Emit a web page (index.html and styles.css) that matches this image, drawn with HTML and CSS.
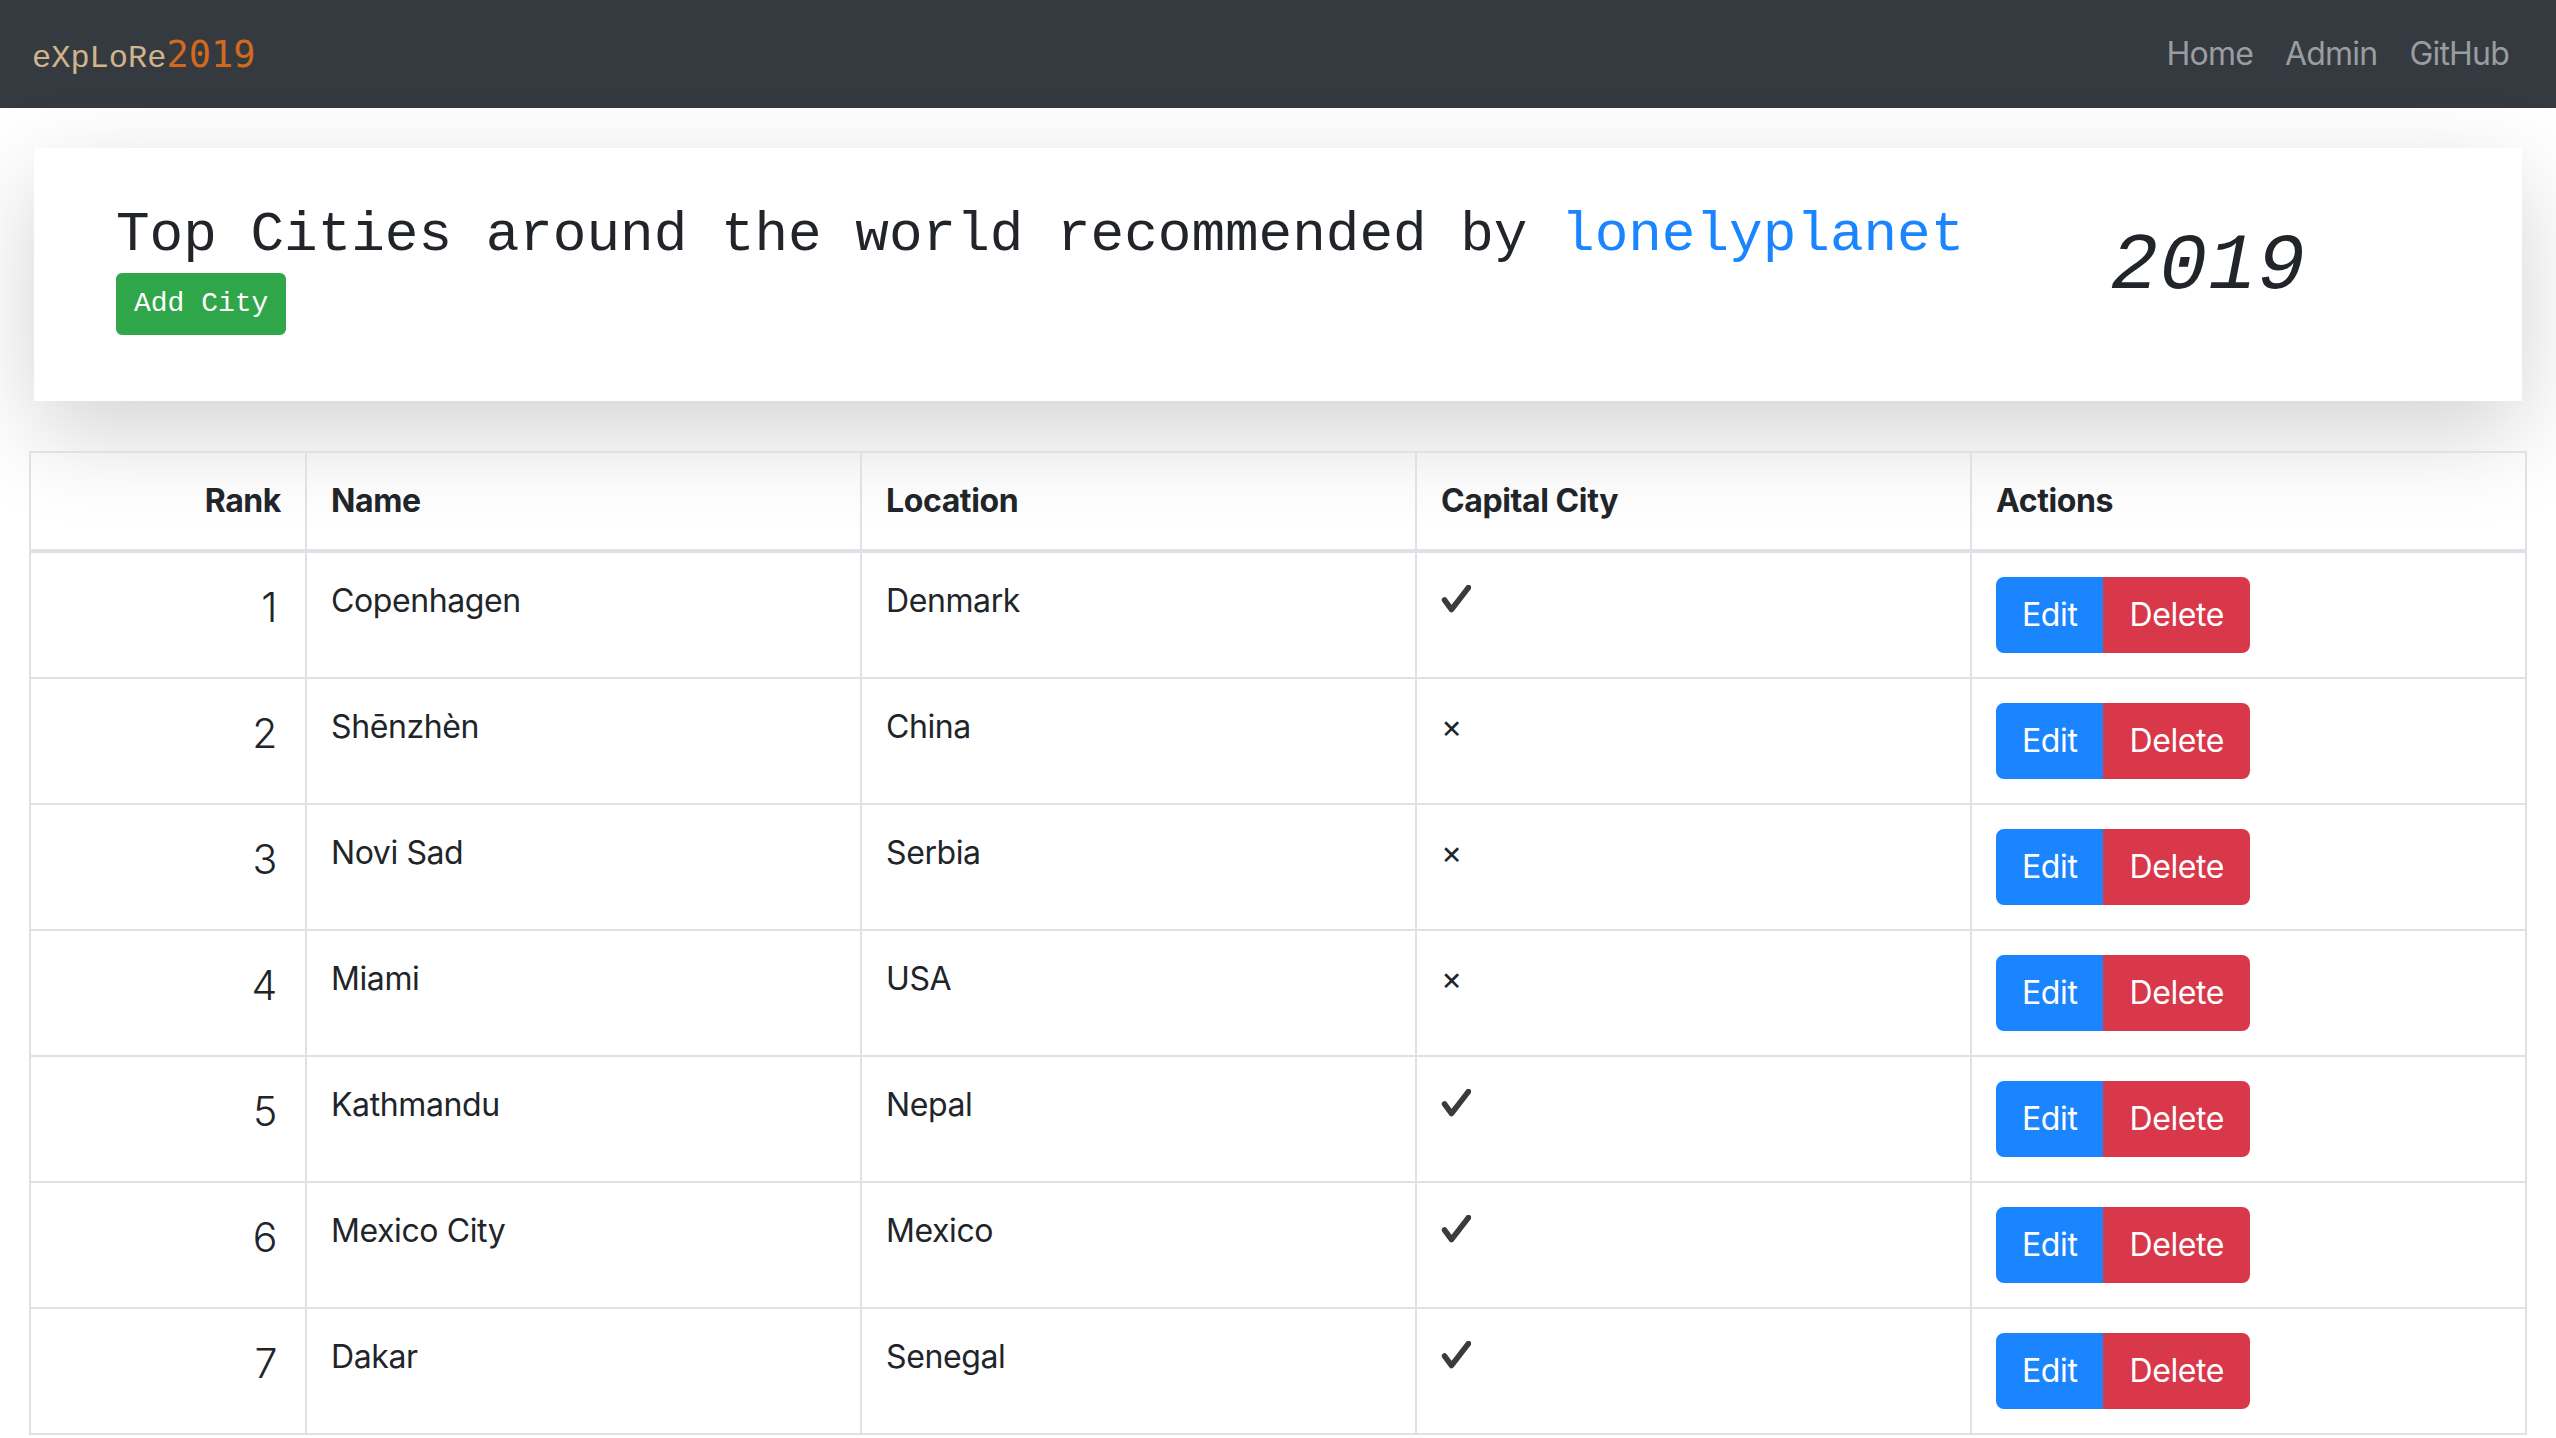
FILE: index.html
```html
<!DOCTYPE html>
<html lang="en">
<head>
<meta charset="utf-8">
<title>eXpLoRe2019</title>
<link rel="stylesheet" href="styles.css">
</head>
<body>
<nav class="navbar">
  <a class="brand" href="#">eXpLoRe<span class="brand-year">2019</span></a>
  <div class="nav-links">
    <a class="nav-link" href="#">Home</a>
    <a class="nav-link" href="#">Admin</a>
    <a class="nav-link" href="#">GitHub</a>
  </div>
</nav>

<main class="container">
  <section class="jumbo">
    <div class="jumbo-main">
      <h3 class="jumbo-title">Top Cities around the world recommended by <a class="lp-link" href="#">lonelyplanet</a></h3>
      <button class="btn-add">Add City</button>
    </div>
    <div class="jumbo-year">2019</div>
  </section>

  <table class="cities">
    <colgroup>
      <col class="col-rank">
      <col><col><col><col>
    </colgroup>
    <thead>
      <tr>
        <th class="rank">Rank</th>
        <th>Name</th>
        <th>Location</th>
        <th>Capital City</th>
        <th>Actions</th>
      </tr>
    </thead>
    <tbody>
      <tr>
        <td class="rank lead">1</td><td>Copenhagen</td><td>Denmark</td>
        <td><svg class="check" width="30" height="28" viewBox="0 0 30 28"><path d="M3.5 15 L10.5 24.5 L27.5 2.5" fill="none" stroke="#3b3b3b" stroke-width="5.5" stroke-linecap="round" stroke-linejoin="round"/></svg></td>
        <td><div class="btn-group"><button class="btn btn-edit">Edit</button><button class="btn btn-del">Delete</button></div></td>
      </tr>
      <tr>
        <td class="rank lead">2</td><td>Shēnzhèn</td><td>China</td>
        <td><span class="cross">×</span></td>
        <td><div class="btn-group"><button class="btn btn-edit">Edit</button><button class="btn btn-del">Delete</button></div></td>
      </tr>
      <tr>
        <td class="rank lead">3</td><td>Novi Sad</td><td>Serbia</td>
        <td><span class="cross">×</span></td>
        <td><div class="btn-group"><button class="btn btn-edit">Edit</button><button class="btn btn-del">Delete</button></div></td>
      </tr>
      <tr>
        <td class="rank lead">4</td><td>Miami</td><td>USA</td>
        <td><span class="cross">×</span></td>
        <td><div class="btn-group"><button class="btn btn-edit">Edit</button><button class="btn btn-del">Delete</button></div></td>
      </tr>
      <tr>
        <td class="rank lead">5</td><td>Kathmandu</td><td>Nepal</td>
        <td><svg class="check" width="30" height="28" viewBox="0 0 30 28"><path d="M3.5 15 L10.5 24.5 L27.5 2.5" fill="none" stroke="#3b3b3b" stroke-width="5.5" stroke-linecap="round" stroke-linejoin="round"/></svg></td>
        <td><div class="btn-group"><button class="btn btn-edit">Edit</button><button class="btn btn-del">Delete</button></div></td>
      </tr>
      <tr>
        <td class="rank lead">6</td><td>Mexico City</td><td>Mexico</td>
        <td><svg class="check" width="30" height="28" viewBox="0 0 30 28"><path d="M3.5 15 L10.5 24.5 L27.5 2.5" fill="none" stroke="#3b3b3b" stroke-width="5.5" stroke-linecap="round" stroke-linejoin="round"/></svg></td>
        <td><div class="btn-group"><button class="btn btn-edit">Edit</button><button class="btn btn-del">Delete</button></div></td>
      </tr>
      <tr>
        <td class="rank lead">7</td><td>Dakar</td><td>Senegal</td>
        <td><svg class="check" width="30" height="28" viewBox="0 0 30 28"><path d="M3.5 15 L10.5 24.5 L27.5 2.5" fill="none" stroke="#3b3b3b" stroke-width="5.5" stroke-linecap="round" stroke-linejoin="round"/></svg></td>
        <td><div class="btn-group"><button class="btn btn-edit">Edit</button><button class="btn btn-del">Delete</button></div></td>
      </tr>
    </tbody>
  </table>
</main>
</body>
</html>
```

FILE: styles.css
```css
* {
  box-sizing: border-box;
}

body {
  margin: 0;
  background: #ffffff;
  color: #212529;
  font-family: "Inter", "Noto Sans", "Liberation Sans", sans-serif;
  font-size: 32px;
  line-height: 48px;
  letter-spacing: -0.4px;
}

/* ---------- navbar ---------- */
.navbar {
  height: 108px;
  background: #343a40;
  display: flex;
  align-items: center;
  justify-content: space-between;
  padding: 0 31px 0 32px;
}

.brand {
  text-decoration: none;
  font-family: "Liberation Mono", "Courier New", monospace;
  font-size: 32px;
  letter-spacing: 0;
  color: #d2b48c;
  padding-top: 6px;
}

.brand-year {
  font-family: "DejaVu Sans Mono", monospace;
  font-size: 37px;
  color: #d2691e;
}

.nav-links {
  display: flex;
}

.nav-link {
  padding: 0 16px;
  color: #9a9da0;
  text-decoration: none;
  letter-spacing: -0.8px;
}

/* ---------- main ---------- */
.container {
  padding: 40px 29px 0;
}

.jumbo {
  margin: 0 5px;
  padding: 54px 82px 66px;
  background: #ffffff;
  box-shadow: 0 32px 96px rgba(0, 0, 0, 0.175);
  display: flex;
  align-items: flex-start;
}

.jumbo-title {
  margin: 0 0 4px;
  font-family: "Liberation Mono", "Courier New", monospace;
  font-size: 56px;
  line-height: 67px;
  font-weight: normal;
  letter-spacing: 0;
  color: #212529;
  white-space: nowrap;
}

.lp-link {
  color: #1a85ff;
  text-decoration: none;
}

.btn-add {
  font-family: "Liberation Mono", "Courier New", monospace;
  font-size: 28px;
  line-height: 42px;
  padding: 8px 16px;
  border: 2px solid #30a64a;
  border-radius: 6px;
  background: #30a64a;
  color: #ffffff;
  letter-spacing: 0;
}

.jumbo-year {
  margin-left: 146px;
  margin-top: 25px;
  font-family: "Liberation Mono", "Courier New", monospace;
  font-style: italic;
  font-size: 80px;
  line-height: 80px;
  letter-spacing: 1px;
  color: #212529;
}

/* ---------- table ---------- */
.cities {
  width: 100%;
  margin-top: 50px;
  border-collapse: collapse;
  table-layout: fixed;
  border: 2px solid #dee2e6;
}

.col-rank {
  width: 276px;
}

.cities th,
.cities td {
  padding: 24px;
  border: 2px solid #dee2e6;
  vertical-align: top;
  text-align: left;
}

.cities th {
  font-weight: 700;
  border-bottom-width: 4px;
}

.cities .rank {
  text-align: right;
}

.cities td.rank {
  padding-right: 28px;
}

.lead {
  font-size: 41px;
  line-height: 60px;
  font-weight: 300;
}

.check {
  display: block;
  margin-top: 8px;
}

.cross {
  color: #212529;
}

.btn-group {
  display: inline-flex;
}

.btn {
  font-family: inherit;
  font-size: 32px;
  line-height: 48px;
  letter-spacing: -0.4px;
  padding: 12px 24px;
  color: #ffffff;
  border: 2px solid transparent;
  margin: 0;
}

.btn-edit {
  background: #1a85ff;
  border-color: #1a85ff;
  border-radius: 8px 0 0 8px;
}

.btn-del {
  background: #d9374a;
  border-color: #d9374a;
  border-radius: 0 8px 8px 0;
}
```
